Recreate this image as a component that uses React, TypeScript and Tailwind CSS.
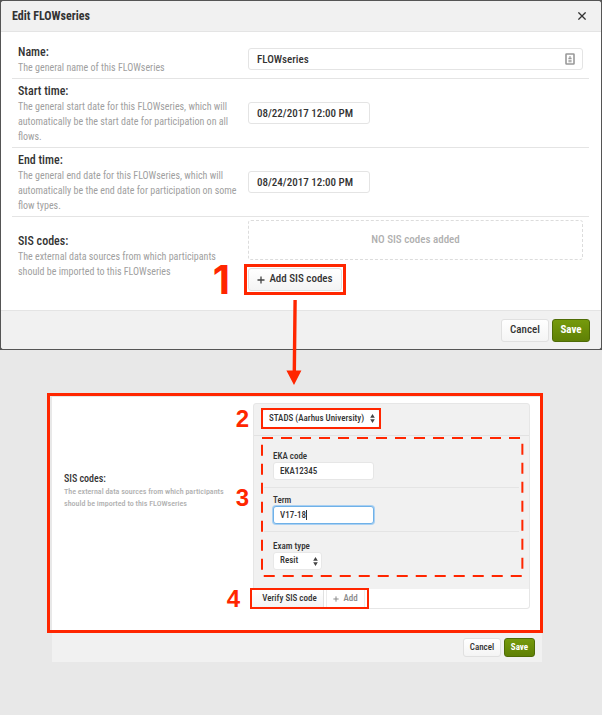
import React from "react";
import type { ReactNode } from "react";

const redStroke = "#ff2600";

function Row({ label, hint, htmlFor, children }: { label: string; hint: string; htmlFor: string; children: ReactNode }) {
  return (
    <div className="flex items-center border-b border-[#e4e4e4] py-[3px] pr-1.5 pl-1.5 last:border-b-0">
      <div className="mr-2 w-[222px] shrink-0 pt-px">
        <label htmlFor={htmlFor} className="block text-[12px] leading-4 font-medium text-[#333]">
          {label}
        </label>
        <p className="text-[10px] leading-[15px] text-[#a0a0a0]">{hint}</p>
      </div>
      <div className="min-w-0 flex-1">{children}</div>
    </div>
  );
}

const inputLarge =
  "h-[22px] rounded-[3px] border border-[#e4e4e4] bg-white px-2 text-[11px] font-medium text-[#333] outline-none";
const inputSmall = "block h-[18px] w-[101px] rounded-[3px] border bg-white px-1.5 text-[9px] font-medium text-[#333] outline-none";
const lightButton = "rounded-[3px] border border-[#e0e0e0] bg-linear-to-b from-white to-[#f4f4f4] font-medium text-[#333]";
const greenButton = "rounded-[3px] border border-[#4f6c06] bg-linear-to-b from-[#759a0c] to-[#5f8006] font-bold text-white";

function Plus({ className }: { className: string }) {
  return (
    <svg viewBox="0 0 8 8" className={className} fill="none" stroke="currentColor" strokeWidth="1.3" aria-hidden="true">
      <path d="M4 0.5v7M0.5 4h7" />
    </svg>
  );
}

function Sorter({ className }: { className: string }) {
  return (
    <svg viewBox="0 0 5 9" className={`pointer-events-none absolute h-[9px] w-[5px] ${className}`} fill="#444" aria-hidden="true">
      <path d="M2.5 0L4.8 3.8H0.2zM2.5 9L4.8 5.2H0.2z" />
    </svg>
  );
}

function EditDialog() {
  return (
    <section className="border border-[#555] bg-[#555]" aria-label="Edit FLOWseries">
      <div className="rounded-[3px] bg-white">
        <header className="flex h-[31px] items-center justify-between rounded-t-[3px] border-b border-[#e4e4e4] bg-[#f1f1f1] pr-[15px] pl-[11px]">
          <h1 className="text-[12px] font-bold text-[#333]">Edit FLOWseries</h1>
          <button type="button" aria-label="Close" className="text-[#333]">
            <svg viewBox="0 0 8 8" className="h-2 w-2" fill="none" stroke="currentColor" strokeWidth="1.3">
              <path d="M0.4 0.4l7.2 7.2M7.6 0.4L0.4 7.6" />
            </svg>
          </button>
        </header>

        <div className="px-[11px] pt-2 pr-3 pb-4">
          <Row label="Name:" hint="The general name of this FLOWseries" htmlFor="name">
            <div className="relative flex">
              <input id="name" defaultValue="FLOWseries" className={`${inputLarge} w-full`} />
              <svg viewBox="0 0 10 12" className="absolute top-[5px] right-2 h-3 w-2.5" fill="none" aria-hidden="true">
                <rect x="1" y="1" width="8" height="10" rx="0.5" stroke="#999" strokeWidth="1.6" />
                <path d="M5 3v3M3.4 5.4h3.2M3.4 7.2h3.2M3.4 8.8h3.2" stroke="#999" strokeWidth="1.1" />
              </svg>
            </div>
          </Row>
          <Row
            label="Start time:"
            hint="The general start date for this FLOWseries, which will automatically be the start date for participation on all flows."
            htmlFor="start"
          >
            <input id="start" defaultValue="08/22/2017 12:00 PM" className={`${inputLarge} block w-[122px]`} />
          </Row>
          <Row
            label="End time:"
            hint="The general end date for this FLOWseries, which will automatically be the end date for participation on some flow types."
            htmlFor="end"
          >
            <input id="end" defaultValue="08/24/2017 12:00 PM" className={`${inputLarge} block w-[122px]`} />
          </Row>
          <Row
            label="SIS codes:"
            hint="The external data sources from which participants should be imported to this FLOWseries"
            htmlFor="add-sis"
          >
            <div className="flex h-10 items-center justify-center rounded-[3px] border border-dashed border-[#dcdcdc] text-[11px] font-medium text-[#b0b0b0]">
              NO SIS codes added
            </div>
            <div className="relative mt-2 w-[94px] outline-3 outline-offset-1 outline-[#ff2600]">
              <button
                id="add-sis"
                type="button"
                className={`${lightButton} flex h-[23px] w-full items-center justify-center gap-1 text-[11px]`}
              >
                <Plus className="h-2 w-2 text-[#444]" />
                Add SIS codes
              </button>
              <span className="absolute top-1/2 right-full mr-[18px] -translate-y-1/2 text-[40px] leading-10 font-bold text-[#ff2600] [font-family:Inter,sans-serif]">
                1
              </span>
              <svg viewBox="0 0 16 86" className="absolute top-8 left-[38px] z-10 h-[86px] w-4" fill={redStroke} aria-hidden="true">
                <path d="M7.4 0h3.4L10 72H6.6zM0.4 70.5h15L8 85z" />
              </svg>
            </div>
          </Row>
        </div>

        <footer className="flex h-[39px] items-center justify-end gap-[3px] rounded-b-[3px] border-t border-[#e4e4e4] bg-[#f1f1f1] pr-[11px]">
          <button type="button" className={`${lightButton} h-[23px] w-12 text-[11px]`}>
            Cancel
          </button>
          <button type="button" className={`${greenButton} h-[23px] w-[38px] text-[11px]`}>
            Save
          </button>
        </footer>
      </div>
    </section>
  );
}

function Step({ children, className }: { children: ReactNode; className: string }) {
  return (
    <span className={`absolute text-[24px] leading-6 font-bold text-[#ff2600] [font-family:'Liberation_Sans',sans-serif] ${className}`}>
      {children}
    </span>
  );
}

function SisCard() {
  return (
    <div className="flex-1 rounded-[3px] border border-[#e6e6e6] bg-[#f1f1f1]">
      <div className="relative border-b border-[#e2e2e2] pt-1.5 pb-2 pl-[9px]">
        <div className="relative h-[17px] w-[116px] outline-2 outline-[#ff2600]">
          <select
            aria-label="SIS system"
            className="block h-full w-full appearance-none rounded-[3px] bg-white pl-1.5 text-[9px] leading-[17px] font-medium text-[#333]"
          >
            <option>STADS (Aarhus University)</option>
          </select>
          <Sorter className="top-1 right-1" />
        </div>
        <Step className="top-[3px] right-full mr-[5px]">2</Step>
      </div>

      <div className="relative px-2.5 pt-3.5 pb-[19px]">
        <svg className="pointer-events-none absolute top-px left-[7px] h-[140px] w-[calc(100%-12px)]" fill="none" aria-hidden="true">
          <rect x="1" y="1" width="99%" height="138" stroke={redStroke} strokeWidth="2" strokeDasharray="11 8" />
        </svg>
        <Step className="top-[50px] right-full mr-[5px]">3</Step>
        <div className="border-b border-[#e4e4e4] pb-[7px] pl-[9px]">
          <label htmlFor="eka" className="block text-[9px] leading-3 font-medium text-[#333]">EKA code</label>
          <input id="eka" defaultValue="EKA12345" className={`${inputSmall} border-[#e6e6e6]`} />
        </div>
        <div className="border-b border-[#e4e4e4] pt-1.5 pb-[7px] pl-[9px]">
          <label htmlFor="term" className="block text-[9px] leading-3 font-medium text-[#333]">Term</label>
          <div className="relative w-[101px]">
            <input id="term" defaultValue="V17-18" className={`${inputSmall} border-[#6fb1e8] ring-1 ring-[#a9d0f2]`} />
            <span className="absolute top-1 left-[33px] h-2.5 w-px bg-[#333]" />
          </div>
        </div>
        <div className="pt-2 pl-[9px]">
          <label htmlFor="exam" className="block text-[9px] leading-3 font-medium text-[#333]">Exam type</label>
          <div className="relative w-[49px]">
            <select id="exam" className="block h-[18px] w-full appearance-none rounded-[3px] border border-[#e8e8e8] bg-white pl-1.5 text-[9px] font-medium text-[#333]">
              <option>Resit</option>
            </select>
            <Sorter className="top-[5px] right-1" />
          </div>
        </div>
      </div>

      <div className="relative rounded-b-[3px] bg-white py-px">
        <div className="-ml-0.5 flex h-[17px] w-[115px] justify-between outline-2 outline-[#ff2600]">
          <button type="button" className="w-[72px] border-r border-[#e0e0e0] bg-linear-to-b from-white to-[#f4f4f4] pl-1 text-[9px] font-medium text-[#333]">
            Verify SIS code
          </button>
          <button type="button" className="mr-0.5 flex w-[39px] items-center justify-center gap-1 border-x border-[#ececec] text-[9px] font-medium text-[#888]">
            <Plus className="h-1.5 w-1.5" />
            Add
          </button>
        </div>
        <Step className="-top-0.5 right-full mr-3.5">4</Step>
      </div>
    </div>
  );
}

function SisDetail() {
  return (
    <section className="mt-[43px] mr-[59px] ml-[47px]" aria-label="SIS codes">
      <div className="flex items-center border-3 border-[#ff2600] bg-white pt-[7px] pr-2.5 pb-[21px] shadow-[inset_2px_1px_0_#e8e8e8]">
        <div className="mr-3 ml-3.5 w-[177px] shrink-0 pb-[30px]">
          <h2 className="text-[10px] leading-[14px] font-medium text-[#333]">SIS codes:</h2>
          <p className="text-[8px] leading-3 font-medium text-[#b0b0b0]">
            The external data sources from which participants should be imported to this FLOWseries
          </p>
        </div>
        <SisCard />
      </div>
      <footer className="mr-px ml-[5px] flex h-[29px] items-center justify-end gap-[3px] bg-[#f1f1f1] pr-[7px]">
        <button type="button" className={`${lightButton} h-[19px] w-[38px] text-[9px]`}>
          Cancel
        </button>
        <button type="button" className={`${greenButton} h-[19px] w-[31px] text-[9px]`}>
          Save
        </button>
      </footer>
    </section>
  );
}

export default function App() {
  return (
    <main className="min-h-screen bg-[#e8e8e8] [font-family:'Roboto_Condensed',Roboto,sans-serif]">
      <EditDialog />
      <SisDetail />
    </main>
  );
}
